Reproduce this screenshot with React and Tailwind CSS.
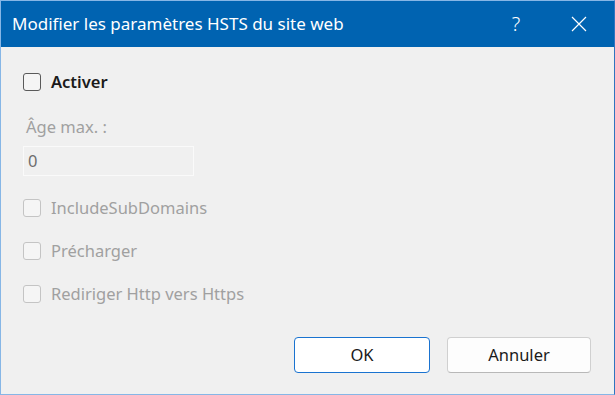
import React from "react"

const CheckBox = ({ label, disabled }) => (
  <label className="flex items-center gap-[10px] h-[20px] leading-[20px]">
    <span
      className={`w-[18px] h-[18px] rounded-[3px] border-[1.5px] bg-[#f5f5f5] ${
        disabled ? "border-[#c4c4c4]" : "border-[#5a5a5a]"
      }`}
    ></span>
    <span className={disabled ? "text-[#a0a0a0]" : "text-[#1a1a1a] font-semibold"}>{label}</span>
  </label>
)

export default function App() {
  return (
    <div
      className="w-[615px] h-[395px] flex flex-col bg-[#f0f0f0] border border-[#86b6e6] border-r-[#2f74bf] text-[16.5px]"
      style={{ fontFamily: "'Noto Sans', 'Open Sans', sans-serif" }}
    >
      {/* Title bar */}
      <div className="h-[46px] bg-[#0063b1] flex items-center text-white shrink-0">
        <span className="pl-[11px] text-[17px] flex-1">Modifier les paramètres HSTS du site web</span>
        <span className="w-[46px] text-center text-[20px] font-light">?</span>
        <span className="w-[46px] flex justify-center ml-[17px] mr-[12px]">
          <svg width="16" height="16" viewBox="0 0 16 16" fill="none" stroke="white" strokeWidth="1.2">
            <path d="M1 1 L15 15 M15 1 L1 15" />
          </svg>
        </span>
      </div>

      {/* Body */}
      <div className="flex-1 flex flex-col pl-[22px] pr-[23px]">
        <div className="mt-[25px]">
          <CheckBox label="Activer" />
        </div>
        <div className="mt-[25px] pl-[3px] h-[20px] leading-[20px] text-[#a0a0a0]">Âge max. :</div>
        <div className="mt-[9px] w-[171px] h-[30px] border border-[#fafafa] flex items-center pl-[4px] text-[#6d6d6d]">
          0
        </div>
        <div className="mt-[22px] flex flex-col gap-[23px]">
          <CheckBox label="IncludeSubDomains" disabled />
          <CheckBox label="Précharger" disabled />
          <CheckBox label="Rediriger Http vers Https" disabled />
        </div>
        <div className="flex-1"></div>
        <div className="flex justify-end gap-[17px] mb-[21px]">
          <button className="w-[136px] h-[36px] rounded-[4px] bg-white border border-[#1a73d0] text-[#1a1a1a]">
            OK
          </button>
          <button className="w-[144px] h-[36px] rounded-[4px] bg-[#fdfdfd] border border-[#d0d0d0] border-b-[#b8b8b8] text-[#1a1a1a]">
            Annuler
          </button>
        </div>
      </div>
    </div>
  )
}
